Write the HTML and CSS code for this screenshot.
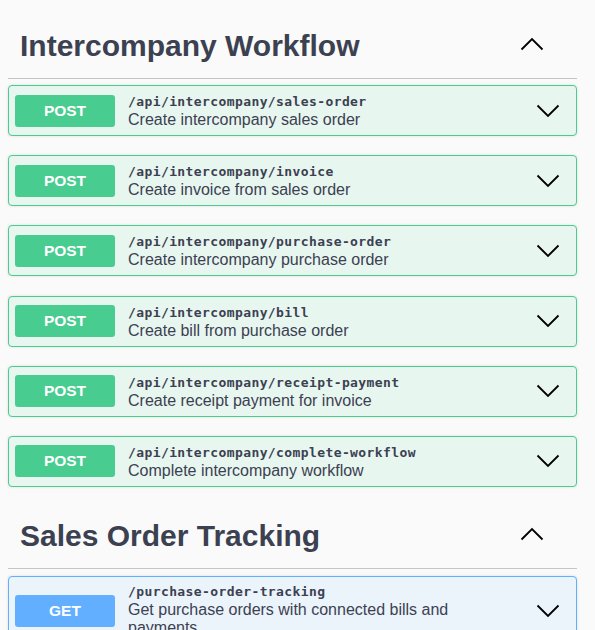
FILE: index.html
```html
<!DOCTYPE html>
<html lang="en">
<head>
<meta charset="utf-8">
<title>Intercompany API</title>
<link rel="stylesheet" href="styles.css">
</head>
<body>
<div class="page">
  <section class="tag-section first">
    <div class="tag-header">
      <h3 class="tag-title">Intercompany Workflow</h3>
      <svg class="chev-up" width="24" height="14" viewBox="0 0 24 14"><polyline points="1.5,12.5 12,2 22.5,12.5" fill="none" stroke="#000" stroke-width="1.8"/></svg>
    </div>
    <div class="ops">
      <div class="opblock post">
        <span class="method">POST</span>
        <div class="op-text"><span class="path">/api/intercompany/sales-order</span><span class="desc">Create intercompany sales order</span></div>
        <span class="arrow"><svg width="24" height="14" viewBox="0 0 24 14"><polyline points="1.5,1.5 12,12 22.5,1.5" fill="none" stroke="#000" stroke-width="1.8"/></svg></span>
      </div>
      <div class="opblock post">
        <span class="method">POST</span>
        <div class="op-text"><span class="path">/api/intercompany/invoice</span><span class="desc">Create invoice from sales order</span></div>
        <span class="arrow"><svg width="24" height="14" viewBox="0 0 24 14"><polyline points="1.5,1.5 12,12 22.5,1.5" fill="none" stroke="#000" stroke-width="1.8"/></svg></span>
      </div>
      <div class="opblock post">
        <span class="method">POST</span>
        <div class="op-text"><span class="path">/api/intercompany/purchase-order</span><span class="desc">Create intercompany purchase order</span></div>
        <span class="arrow"><svg width="24" height="14" viewBox="0 0 24 14"><polyline points="1.5,1.5 12,12 22.5,1.5" fill="none" stroke="#000" stroke-width="1.8"/></svg></span>
      </div>
      <div class="opblock post">
        <span class="method">POST</span>
        <div class="op-text"><span class="path">/api/intercompany/bill</span><span class="desc">Create bill from purchase order</span></div>
        <span class="arrow"><svg width="24" height="14" viewBox="0 0 24 14"><polyline points="1.5,1.5 12,12 22.5,1.5" fill="none" stroke="#000" stroke-width="1.8"/></svg></span>
      </div>
      <div class="opblock post">
        <span class="method">POST</span>
        <div class="op-text"><span class="path">/api/intercompany/receipt-payment</span><span class="desc">Create receipt payment for invoice</span></div>
        <span class="arrow"><svg width="24" height="14" viewBox="0 0 24 14"><polyline points="1.5,1.5 12,12 22.5,1.5" fill="none" stroke="#000" stroke-width="1.8"/></svg></span>
      </div>
      <div class="opblock post">
        <span class="method">POST</span>
        <div class="op-text"><span class="path">/api/intercompany/complete-workflow</span><span class="desc">Complete intercompany workflow</span></div>
        <span class="arrow"><svg width="24" height="14" viewBox="0 0 24 14"><polyline points="1.5,1.5 12,12 22.5,1.5" fill="none" stroke="#000" stroke-width="1.8"/></svg></span>
      </div>
    </div>
  </section>
  <section class="tag-section second">
    <div class="tag-header">
      <h3 class="tag-title">Sales Order Tracking</h3>
      <svg class="chev-up" width="24" height="14" viewBox="0 0 24 14"><polyline points="1.5,12.5 12,2 22.5,12.5" fill="none" stroke="#000" stroke-width="1.8"/></svg>
    </div>
    <div class="ops">
      <div class="opblock get">
        <span class="method">GET</span>
        <div class="op-text"><span class="path">/purchase-order-tracking</span><span class="desc">Get purchase orders with connected bills and payments</span></div>
        <span class="arrow"><svg width="24" height="14" viewBox="0 0 24 14"><polyline points="1.5,1.5 12,12 22.5,1.5" fill="none" stroke="#000" stroke-width="1.8"/></svg></span>
      </div>
      <div class="opblock get">
        <span class="method">GET</span>
        <div class="op-text"><span class="path">/sales-order-tracking</span><span class="desc">Get sales orders with connected invoices and receipts</span></div>
        <span class="arrow"><svg width="24" height="14" viewBox="0 0 24 14"><polyline points="1.5,1.5 12,12 22.5,1.5" fill="none" stroke="#000" stroke-width="1.8"/></svg></span>
      </div>
    </div>
  </section>
</div>
</body>
</html>
```

FILE: styles.css
```css
html {
  overflow: hidden;
}
body {
  margin: 0;
  background: #fafafa;
  font-family: "Liberation Sans", Arial, sans-serif;
  color: #3b4151;
}
.page {
  width: 569px;
  margin-left: 8px;
}
.tag-section.first {
  padding-top: 17px;
}
.tag-section.second {
  padding-top: 1px;
}
.tag-header {
  height: 62px;
  box-sizing: border-box;
  padding: 0 33px 3px 12px;
  border-bottom: 1px solid #c4c5ca;
  display: flex;
  align-items: center;
  justify-content: space-between;
}
.tag-title {
  margin: 0;
  font-size: 30px;
  font-weight: 700;
  line-height: 36px;
  color: #3b4151;
}
.chev-up {
  display: block;
  margin-bottom: 4px;
}
.ops {
  padding-top: 6px;
}
.second .ops {
  padding-top: 7px;
}
.opblock {
  display: flex;
  align-items: center;
  box-sizing: border-box;
  min-height: 51px;
  margin-bottom: 19.2px;
  padding: 8px 0 8px 6px;
  border: 1px solid;
  border-radius: 4px;
  box-shadow: 0 0 3px rgba(0,0,0,.12);
}
.opblock.post {
  background: #e8f6f0;
  border-color: #49cc90;
}
.opblock.get {
  background: #ebf3fb;
  border-color: #61affe;
}
.method {
  flex: none;
  width: 100px;
  height: 32px;
  border-radius: 3px;
  color: #fff;
  font-size: 15.5px;
  font-weight: 700;
  display: flex;
  align-items: center;
  justify-content: center;
}
.post .method { background: #49cc90; }
.get .method { background: #61affe; }
.op-text {
  flex: 1;
  display: flex;
  flex-direction: column;
  padding-left: 13px;
  padding-right: 40px;
  margin-bottom: -3px;
}
.get .op-text {
  margin-bottom: 0;
}
.path {
  font-family: "DejaVu Sans Mono", "Liberation Mono", monospace;
  font-weight: 700;
  font-size: 13px;
  letter-spacing: 0.4px;
  line-height: 14px;
  color: #3b4151;
}
.desc {
  margin-top: 2px;
  font-size: 16px;
  line-height: 18px;
  color: #3b4151;
}
.arrow {
  flex: none;
  width: 40px;
  display: flex;
  justify-content: flex-start;
}
.arrow svg {
  display: block;
}
```
